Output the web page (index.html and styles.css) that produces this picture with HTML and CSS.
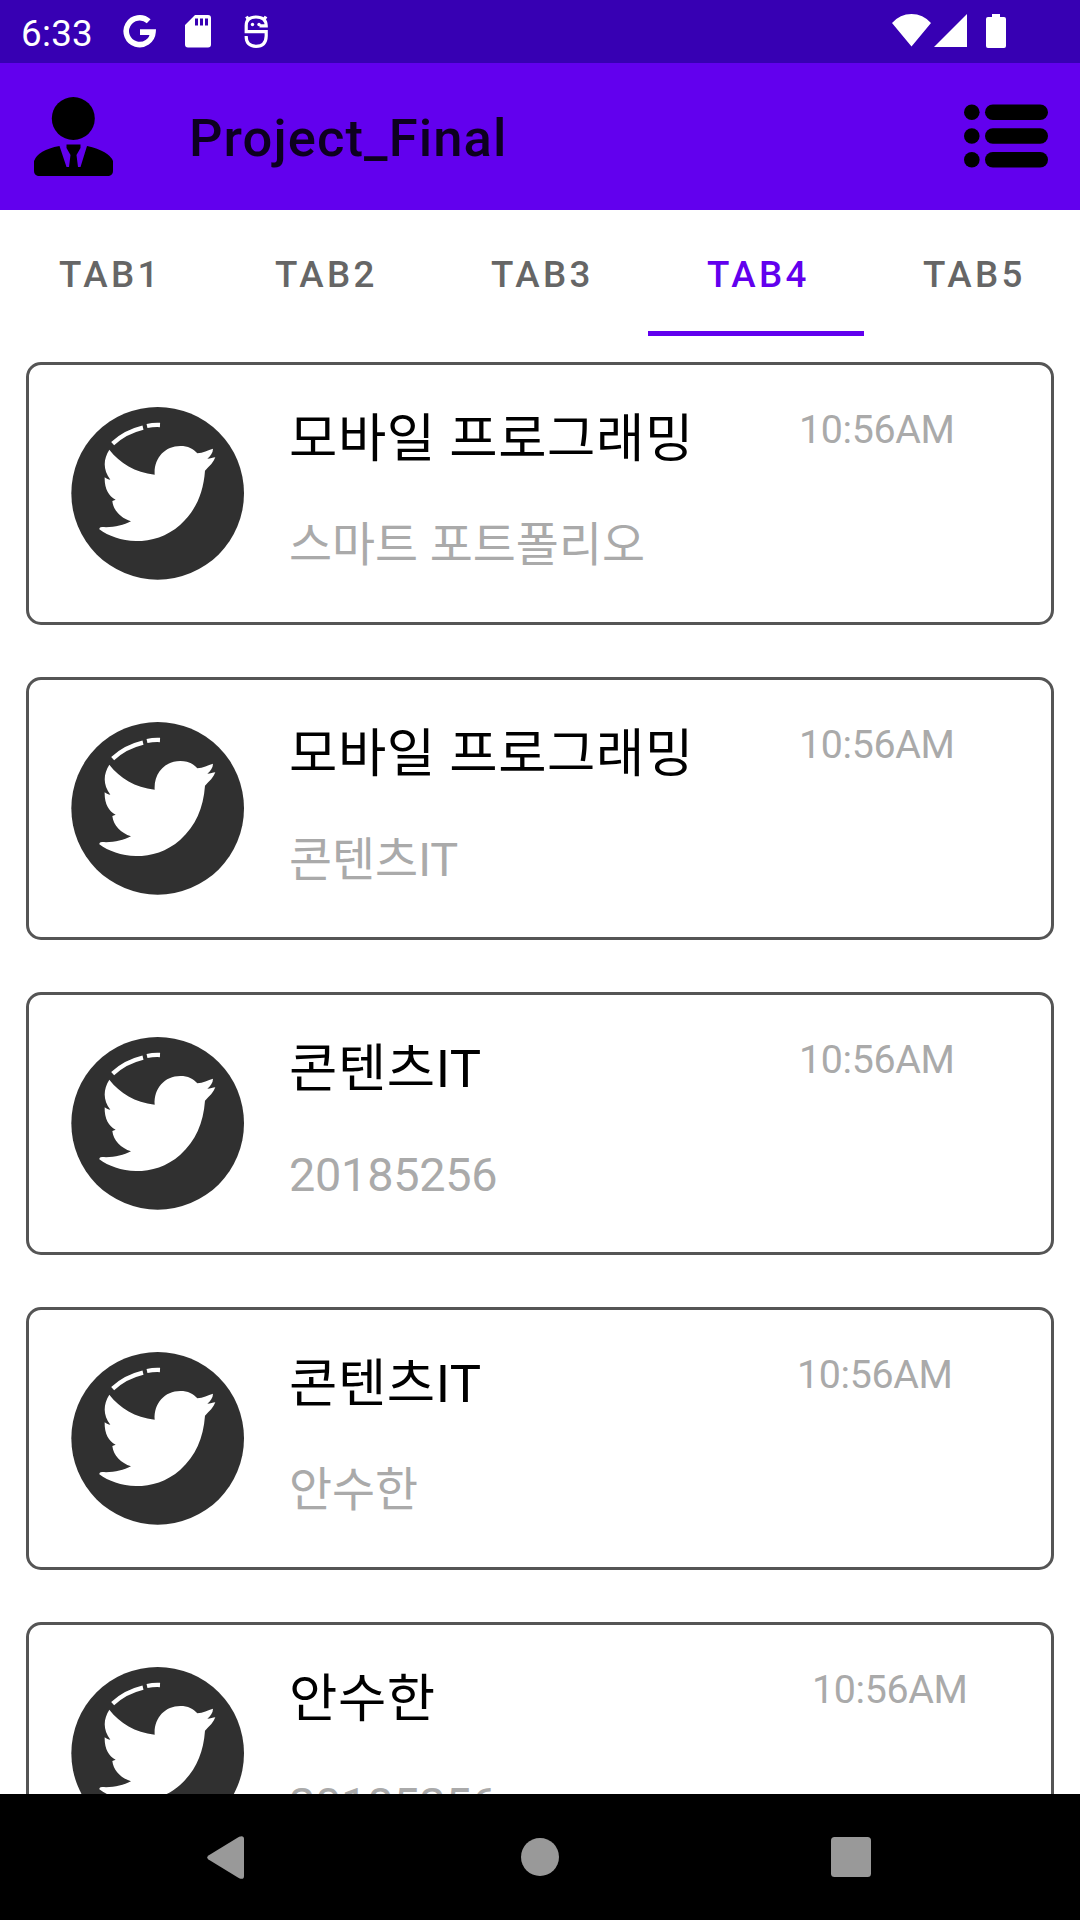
FILE: index.html
```html
<!DOCTYPE html>
<html lang="ko">
<head>
<meta charset="utf-8">
<title>Project_Final</title>
<link rel="stylesheet" href="styles.css">
</head>
<body>
<svg class="defs" width="0" height="0" aria-hidden="true">
  <symbol id="bird" viewBox="0 0 630 630">
    <circle cx="323" cy="310" r="259" fill="#303030"/>
    <path d="M188 161Q225 126 279 113M291 108Q310 104 330 105" fill="none" stroke="#fff" stroke-width="13"/>
    <path fill="#fff" d="M178 179C210 220 255 247 314 254C311 205 344 168 391 168C414 168 430 176 442 190C459 188 474 181 489 176C489 188 481 198 472 206C481 206 489 203 496 202C491 217 478 229 465 242C460 310 437 362 391 404C350 440 305 453 258 453C214 453 175 438 148 418C148 413 151 411 156 411C188 413 219 407 243 394C213 384 190 362 187 333L197 329C176 319 163 296 164 262C170 266 176 269 181 269C158 239 160 207 178 179Z"/>
  </symbol>
</svg>
<div class="screen">
  <header class="status">
    <span class="clock">6:33</span>
    <svg class="notices" width="150" height="40" viewBox="0 0 150 40" fill="#fff">
      <path d="M25.700 7.300A13.400 13.400 0 1 0 30 18.100H17" fill="none" stroke="#fff" stroke-width="5.600"/>
      <path d="M72 1H85q3 0 3 3V30.500q0 3-3 3H65q-3 0-3-3V11ZM72 4.500v7h3v-7Zm5 0v7h3v-7Zm5 0v7h3v-7Z" fill-rule="evenodd"/>
      <g fill="none" stroke="#fff" stroke-width="3.200">
        <path d="M136.500 11.800H143.200Q143 3 133 3T123.200 12V17.700H143.200V22Q143 32.300 133 32.300T123.200 22"/>
        <path d="M126 6.500L123.500 2.500M140.500 6.500L143 2.500"/>
      </g>
      <circle cx="129.500" cy="10.500" r="1.700"/><circle cx="136" cy="10.500" r="1.700"/>
    </svg>
    <svg class="signals" width="120" height="36" viewBox="0 0 120 36" fill="#fff">
      <path d="M0 9Q8 0 19.500 0T39 9L19.500 32.500ZM42 33L75 0V33Z"/>
      <path d="M100 0h8v3h4q2 0 2 2v27q0 2-2 2H96q-2 0-2-2V5q0-2 2-2h4Z"/>
    </svg>
  </header>
  <div class="toolbar">
    <svg class="person" width="79" height="79" viewBox="0 0 79 79">
      <circle cx="39.300" cy="21.500" r="21.500"/>
      <path d="M4 79Q0 78 0 74V64Q4 53 25.500 49L32.500 70H35L36.500 58L32.500 51V47.500H46.500V51L42.500 58L44 70H46.500L53 49Q75 54 79 64V74Q79 78 75 79Z"/>
    </svg>
    <h1 class="title">Project_Final</h1>
    <svg class="menu" width="84" height="64" viewBox="0 0 84 64">
      <circle cx="7.800" cy="8.300" r="7.800"/><circle cx="7.800" cy="32" r="7.800"/><circle cx="7.800" cy="55.700" r="7.800"/>
      <rect x="21" y=".5" width="63" height="15.600" rx="7.800"/><rect x="21" y="24.200" width="63" height="15.600" rx="7.800"/><rect x="21" y="47.900" width="63" height="15.600" rx="7.800"/>
    </svg>
  </div>
  <nav class="tabs">
    <div class="tab">TAB1</div><div class="tab">TAB2</div><div class="tab">TAB3</div><div class="tab active">TAB4</div><div class="tab">TAB5</div>
  </nav>
  <main class="list">
    <article class="card">
      <svg class="avatar"><use href="#bird"/></svg>
      <div class="texts"><h2 class="name">모바일 프로그래밍</h2><p class="detail">스마트 포트폴리오</p></div>
      <time class="time">10:56AM</time>
    </article>
    <article class="card">
      <svg class="avatar"><use href="#bird"/></svg>
      <div class="texts"><h2 class="name">모바일 프로그래밍</h2><p class="detail">콘텐츠IT</p></div>
      <time class="time">10:56AM</time>
    </article>
    <article class="card">
      <svg class="avatar"><use href="#bird"/></svg>
      <div class="texts"><h2 class="name">콘텐츠IT</h2><p class="detail number">20185256</p></div>
      <time class="time">10:56AM</time>
    </article>
    <article class="card">
      <svg class="avatar"><use href="#bird"/></svg>
      <div class="texts narrower"><h2 class="name">콘텐츠IT</h2><p class="detail">안수한</p></div>
      <time class="time">10:56AM</time>
    </article>
    <article class="card">
      <svg class="avatar"><use href="#bird"/></svg>
      <div class="texts wider"><h2 class="name">안수한</h2><p class="detail number">20185256</p></div>
      <time class="time">10:56AM</time>
    </article>
  </main>
  <footer class="navbar">
    <svg width="37" height="43" viewBox="0 0 38 42" preserveAspectRatio="none"><path d="M1.500 19L33 .7Q38-1 38 3V39Q38 43 33 41.300L1.500 23Q-1 21 1.500 19Z"/></svg>
    <svg class="home" width="38" height="38" viewBox="0 0 38 38"><circle cx="19" cy="19" r="19"/></svg>
    <svg width="40" height="40" viewBox="0 0 40 40"><rect width="40" height="40" rx="3.500"/></svg>
  </footer>
</div>
</body>
</html>
```
FILE: styles.css
```css
* { box-sizing: border-box; margin: 0; padding: 0; }
body { background: #fff; font-family: Roboto, "Noto Sans CJK KR", sans-serif; }
svg { display: block; flex: none; }
.defs { position: absolute; }
.screen { width: 1080px; height: 1920px; display: flex; flex-direction: column; overflow: hidden; }

.status { height: 63px; flex: none; display: flex; background: #3700b3; color: #fff; padding-left: 21px; }
.clock { width: 102px; font-size: 36.75px; line-height: 43px; padding-top: 12px; letter-spacing: .3px; }
.notices { margin-top: 14px; }
.signals { margin: 14px 0 0 619px; }

.toolbar { height: 147px; flex: none; display: flex; background: #6200ee; padding-left: 34px; }
.person { margin-top: 34px; }
.title { width: 774px; padding: 44px 0 0 76px; font-size: 52.5px; line-height: 62px; font-weight: 500; letter-spacing: 1.1px; color: rgba(0,0,0,.87); }
.menu { margin: 41px 0 0 77px; }

.tabs { height: 126px; flex: none; display: flex; }
.tab { width: 216px; padding: 43px 0 0 5px; border-bottom: 5px solid transparent; text-align: center; font-size: 36.75px; line-height: 43px; font-weight: 500; letter-spacing: 3.4px; color: #666; }
.tab.active { color: #6200ee; border-color: #6200ee; }

.list { height: 1458px; flex: none; overflow: hidden; display: flex; flex-direction: column; gap: 52px; padding: 26px 26px 0; }
.card { height: 263px; flex: none; display: flex; border: 3px solid #555; border-radius: 15px; }
.avatar { width: 210px; height: 210px; margin: 25px 0 0 21px; }
.texts { width: 539px; padding: 36px 0 0 29px; }
.texts.narrower { width: 537px; }
.texts.wider { width: 552px; }
.name { font-size: 52.5px; line-height: 76px; font-weight: 400; letter-spacing: .6px; color: #000; white-space: nowrap; }
.detail { margin-top: 34px; font-size: 46.8px; line-height: 69px; color: #aaa; white-space: nowrap; }
.detail.number { letter-spacing: -.25px; }
.time { padding-top: 42px; font-size: 39.375px; line-height: 46px; letter-spacing: -.35px; color: #aaa; }

.navbar { height: 126px; flex: none; display: flex; align-items: center; justify-content: space-between; padding: 0 209px 0 207px; background: #000; fill: #999; }
.home { margin-left: 5px; }
```
